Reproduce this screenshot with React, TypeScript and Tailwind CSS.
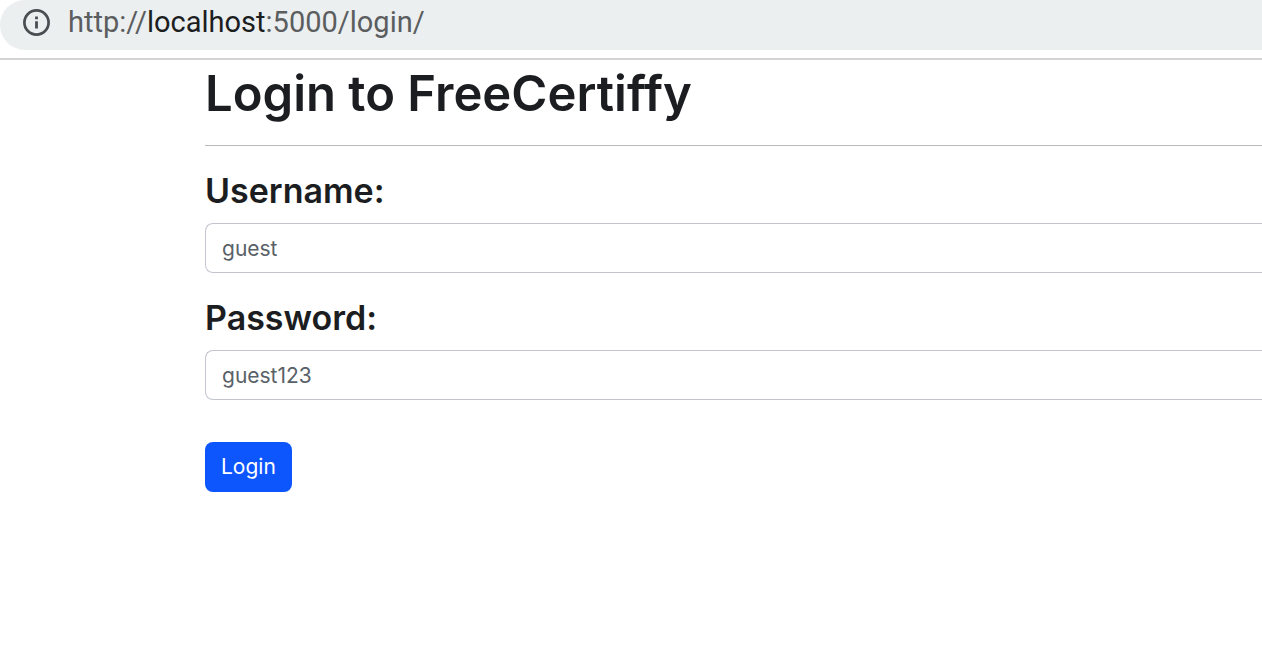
import React from "react";

function AddressBar() {
  return (
    <header className="border-b-2 border-[#d4d4d5] pb-2">
      <div className="flex h-[50px] items-center gap-[17px] rounded-l-[28px] bg-[#ebeff0] pb-[6px] pl-[23px]">
        <svg className="size-7 shrink-0" viewBox="0 0 28 28" fill="none" aria-hidden="true">
          <circle cx="13.5" cy="14.5" r="12.1" stroke="#4a4d51" strokeWidth="2.7" />
          <path d="M13.5 13.2v7.3M13.5 8.5v2.8" stroke="#4a4d51" strokeWidth="2.8" />
        </svg>
        <p className="font-['Roboto',sans-serif] text-[29px] leading-9 text-[#5b5d5f]">
          http://<span className="text-[#1c1d1f]">localhost</span>:5000/login/
        </p>
      </div>
    </header>
  );
}

type FieldProps = {
  id: string;
  label: string;
  type: string;
  placeholder: string;
};

function Field({ id, label, type, placeholder }: FieldProps) {
  return (
    <div className="flex flex-col gap-[12px]">
      <label htmlFor={id} className="text-[34px] font-semibold leading-[40px]">
        {label}
      </label>
      <input
        id={id}
        type={type}
        placeholder={placeholder}
        className="h-[50px] w-full rounded-l-lg border border-r-0 border-[#c2c5d0] px-4 text-[21px] placeholder:text-[#596168] placeholder:opacity-100"
      />
    </div>
  );
}

export default function App() {
  return (
    <div className="min-h-screen bg-white font-['Inter',sans-serif] text-[#1c1d21]">
      <AddressBar />
      <main className="ml-[205px] pt-[2px]">
        <h1 className="text-[49px] font-semibold leading-[64px]">Login to FreeCertiffy</h1>
        <hr className="mt-[19px] border-[#b9babb]" />
        <form className="flex flex-col items-start pt-[25px]" onSubmit={(e) => e.preventDefault()}>
          <div className="flex w-full flex-col gap-[25px]">
            <Field id="username" label="Username:" type="text" placeholder="guest" />
            <Field id="password" label="Password:" type="password" placeholder="guest123" />
          </div>
          <button
            type="submit"
            className="mt-[42px] h-[50px] rounded-lg bg-[#0d55fd] px-4 text-[21px] text-white"
          >
            Login
          </button>
        </form>
      </main>
    </div>
  );
}
